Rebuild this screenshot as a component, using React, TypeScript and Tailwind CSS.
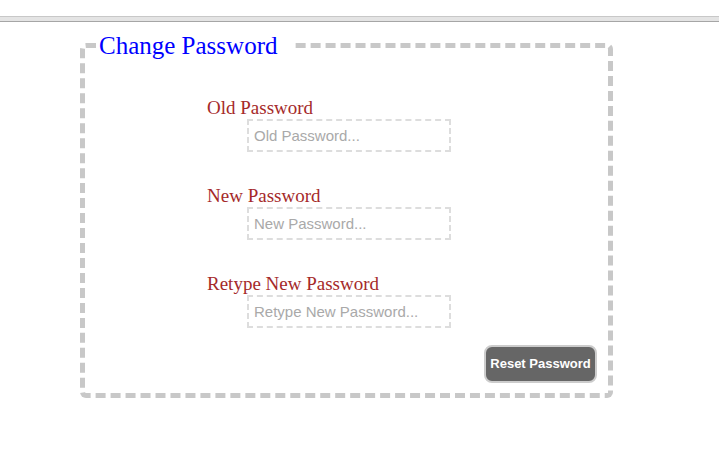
import { useState } from "react";

const fields = [
  { label: "Old Password", placeholder: "Old Password..." },
  { label: "New Password", placeholder: "New Password..." },
  { label: "Retype New Password", placeholder: "Retype New Password..." },
];

function App() {
  const [values, setValues] = useState<string[]>(["", "", ""]);

  return (
    <div className="min-h-[471px] bg-white font-['Liberation_Serif',serif]">
      <div className="pt-4">
        <div className="h-[6px] border-t border-t-[#c8c8c8] border-b border-b-[#a6a6a6] bg-[#e4e4e4]" />
      </div>

      <fieldset className="mt-[5px] ml-[80px] w-[533px] border-[5px] border-dashed border-[#c8c8c8] rounded-md pl-3 pr-[11px] pb-[10px]">
        <legend className="pl-[2px] pr-[14px] text-[25px] text-[#0000ff] font-['Liberation_Serif',serif]">
          Change Password
        </legend>

        <div className="flex flex-col pt-[32px]">
          {fields.map((f, i) => (
            <div key={f.label} className={i < 2 ? "mb-[33px]" : ""}>
              <div className="ml-[110px] text-[19px] leading-[22px] text-[#a52a2a]">
                {f.label}
              </div>
              <input
                type="password"
                value={values[i]}
                placeholder={f.placeholder}
                onChange={(e) => {
                  const next = [...values];
                  next[i] = e.target.value;
                  setValues(next);
                }}
                className="ml-[150px] block w-[204px] h-[33px] border-2 border-dashed border-[#dddddd] px-[5px] font-['Liberation_Sans',sans-serif] text-[15px] text-[#555] placeholder:text-[#a9a9a9] focus:outline-none"
              />
            </div>
          ))}

          <div className="flex justify-end mt-[17px]">
            <button className="w-[113px] h-[38px] rounded-lg border-2 border-[#cccccc] bg-[#666666] text-white font-['Liberation_Sans',sans-serif] font-bold text-[13px]">
              Reset Password
            </button>
          </div>
        </div>
      </fieldset>
    </div>
  );
}

export default App;
